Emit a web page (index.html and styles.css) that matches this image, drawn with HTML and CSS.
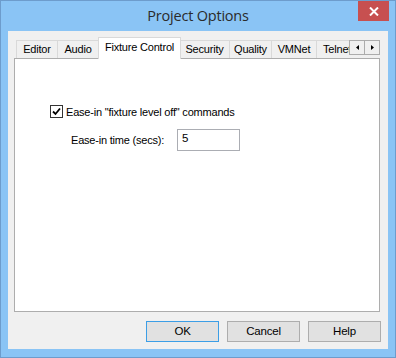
FILE: index.html
```html
<!DOCTYPE html>
<html>
<head>
<meta charset="utf-8"/>
<title>Project Options</title>
<link rel="stylesheet" href="styles.css">
</head>
<body>

<div class="window">
	<div class="titlebar">
		<span></span>
		<div class="title">Project Options</div>
		<div class="close">
			<svg width="10" height="9" viewBox="0 0 10 9"><path d="M1 0.5 L9 8.5 M9 0.5 L1 8.5" stroke="#fff" stroke-width="2"/></svg>
		</div>
	</div>

	<div class="client">
		<div class="tabs">
			<div class="tab tab-editor">Editor</div>
			<div class="tab tab-audio">Audio</div>
			<div class="tab tab-fixture selected">Fixture Control</div>
			<div class="tab tab-security">Security</div>
			<div class="tab tab-quality">Quality</div>
			<div class="tab tab-vmnet">VMNet</div>
			<div class="tab tab-telnet">Telnet</div>
			<div class="spin">
				<div class="spin-btn"><svg width="3" height="5" viewBox="0 0 3 5"><path d="M3 0 L0 2.5 L3 5 Z" fill="#000"/></svg></div>
				<div class="spin-btn"><svg width="3" height="5" viewBox="0 0 3 5"><path d="M0 0 L3 2.5 L0 5 Z" fill="#000"/></svg></div>
			</div>
		</div>

		<div class="panel">
			<label class="check-row">
				<span class="checkbox">
					<svg width="11" height="11" viewBox="0 0 11 11"><path d="M2 5.5 L4.5 8 L9 2.5" stroke="#000" stroke-width="1.8" fill="none"/></svg>
				</span>
				Ease-in "fixture level off" commands
			</label>
			<div class="field-row">
				<span class="field-label">Ease-in time (secs):</span>
				<span class="input">5</span>
			</div>
		</div>

		<div class="buttons">
			<div class="btn default">OK</div>
			<div class="btn">Cancel</div>
			<div class="btn">Help</div>
		</div>
	</div>
</div>

</body>
</html>
```

FILE: styles.css
```css
body {
	margin: 0;
	font-family: "Liberation Sans", Arial, sans-serif;
	font-size: 11px;
	letter-spacing: -0.2px;
	color: #000;
}
/* window frame */
.window {
	width: 394px;
	height: 356px;
	border: 1px solid #6d9ccc;
	background-color: #8ac4f5;
	display: flex;
	flex-direction: column;
}
.titlebar {
	height: 30px;
	display: grid;
	grid-template-columns: 1fr auto 1fr;
}
.title {
	font-family: "Open Sans", "Noto Sans", sans-serif;
	font-size: 14.5px;
	color: #2b2b2b;
	line-height: 30px;
	letter-spacing: -0.2px;
}
.close {
	justify-self: end;
	align-self: start;
	width: 31px;
	height: 20px;
	margin-right: 6px;
	background-color: #c75050;
	display: flex;
	align-items: center;
	justify-content: center;
}
/* client area */
.client {
	flex: 1;
	margin: 0 7px 8px 7px;
	background-color: #f0f0f0;
	display: flex;
	flex-direction: column;
	padding: 6px 8px 0 6px;
}
/* tabs */
.tabs {
	height: 21px;
	display: flex;
	align-items: flex-end;
	padding-left: 2px;
	position: relative;
	z-index: 1;
}
.tab {
	height: 18px;
	line-height: 16px;
	border: 1px solid #d9d9d9;
	border-bottom: none;
	background-color: #f0f0f0;
	text-align: center;
	margin-left: -1px;
	white-space: nowrap;
	overflow: hidden;
	box-sizing: border-box;
}
.tab:first-child {
	margin-left: 0;
}
.tab.selected {
	height: 22px;
	line-height: 19px;
	background-color: #fff;
	margin-bottom: -1px;
	margin-left: -1px;
	margin-right: -1px;
	position: relative;
}
.tab-editor { width: 42px; }
.tab-audio { width: 42px; }
.tab-fixture { width: 83px; }
.tab-security { width: 51px; }
.tab-quality { width: 43px; }
.tab-vmnet { width: 46px; }
.tab-telnet {
	width: 34px;
	text-align: left;
	padding-left: 6px;
	border-right: none;
}
.spin {
	display: flex;
	align-self: flex-start;
	margin-top: 3px;
}
.spin-btn {
	width: 16px;
	height: 15px;
	box-sizing: border-box;
	border: 1px solid #acacac;
	background-color: #f0f0f0;
	display: flex;
	align-items: center;
	justify-content: center;
	margin-left: -1px;
}
/* tab page */
.panel {
	height: 254px;
	box-sizing: border-box;
	border: 1px solid #adadad;
	background-color: #fff;
	padding: 46px 0 0 35px;
}
.check-row {
	display: flex;
	align-items: center;
	height: 13px;
	gap: 3px;
}
.checkbox {
	width: 13px;
	height: 13px;
	box-sizing: border-box;
	border: 1px solid #333;
	background-color: #fff;
	display: flex;
	align-items: center;
	justify-content: center;
}
.field-row {
	display: flex;
	align-items: center;
	margin-top: 11px;
	padding-left: 21px;
}
.field-label {
	width: 106px;
}
.input {
	width: 63px;
	height: 22px;
	box-sizing: border-box;
	border: 1px solid #abadb3;
	padding: 2px 4px;
	font-size: 11.5px;
}
/* buttons */
.buttons {
	display: flex;
	justify-content: flex-end;
	gap: 8px;
	margin-top: 9px;
	margin-right: -1px;
}
.btn {
	width: 73px;
	height: 21px;
	box-sizing: border-box;
	border: 1px solid #adadad;
	background-color: #e1e1e1;
	text-align: center;
	line-height: 19px;
	font-size: 11.5px;
}
.btn.default {
	border-color: #3c9ee6;
}
```
